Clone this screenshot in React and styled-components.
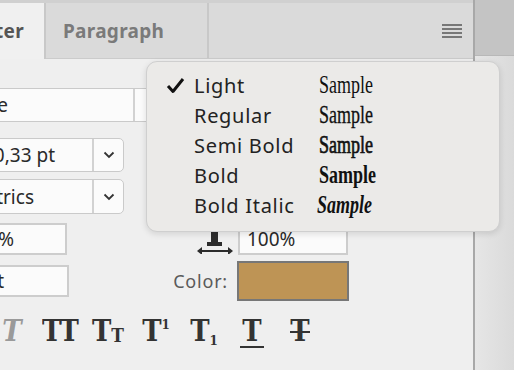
import React from "react";
import styled, { createGlobalStyle } from "styled-components";

const GlobalStyle = createGlobalStyle`
  html, body {
    margin: 0;
    padding: 0;
    background: #efefef;
  }
  body {
    font-family: "Noto Sans", "Liberation Sans", sans-serif;
  }
`;

const Screen = styled.div`
  position: relative;
  display: flex;
  width: 514px;
  height: 370px;
  overflow: hidden;
`;

const Panel = styled.div`
  width: 473px;
  flex-shrink: 0;
  display: flex;
  flex-direction: column;
  background: #efefef;
  border-right: 2px solid #a8a8a8;
  overflow: hidden;
`;

const Side = styled.div`
  flex: 1;
  display: flex;
  flex-direction: column;
  > div.top {
    height: 55px;
    background: #c4c4c4;
    border-bottom: 1px solid #b8b8b8;
  }
  > div.rest {
    flex: 1;
    background: linear-gradient(90deg, #e6e6e6, #dadada);
  }
`;

const TabBar = styled.div`
  height: 55px;
  display: flex;
  align-items: stretch;
  background: #dadada;
  border-top: 3px solid #d0d0d0;
  border-bottom: 1px solid #cbcbcb;
`;

const Tab = styled.div`
  display: flex;
  align-items: center;
  padding: 0 20px 0 ${p => (p.active ? "0" : "17px")};
  margin-left: ${p => (p.active ? "-70px" : "0")};
  width: ${p => (p.active ? "94px" : "124px")};
  justify-content: ${p => (p.active ? "flex-end" : "flex-start")};
  font-size: 19px;
  font-weight: 700;
  letter-spacing: 0.3px;
  color: ${p => (p.active ? "#555" : "#7a7a7a")};
  background: ${p => (p.active ? "#f0f0f0" : "#dadada")};
  border-right: 2px solid #c8c8c8;
  margin-bottom: ${p => (p.active ? "-1px" : "0")};
`;

const TabFill = styled.div`
  flex: 1;
  display: flex;
  align-items: center;
  justify-content: flex-end;
  padding-right: 11px;
`;

const Hamburger = styled.div`
  width: 20px;
  display: flex;
  flex-direction: column;
  gap: 2px;
  > span {
    height: 2px;
    background: #777;
  }
`;

const Body = styled.div`
  display: flex;
  flex-direction: column;
`;

const ComboField = styled.div`
  display: flex;
  height: ${p => p.h}px;
  width: ${p => p.w + 60}px;
  margin-left: -60px;
  margin-top: ${p => p.top}px;
  box-sizing: border-box;
  background: #fbfbfb;
  border: 1px solid #cacaca;
  border-radius: ${p => (p.rounded ? "5px" : "0")};
  font-size: 19px;
  color: #2a2a2a;
  > span.value {
    flex: 1;
    min-width: 0;
    overflow: hidden;
    white-space: nowrap;
    display: flex;
    align-items: center;
    justify-content: flex-end;
    padding-right: ${p => p.endPad}px;
  }
  > span.drop {
    width: ${p => p.dropW}px;
    flex-shrink: 0;
    border-left: 2px solid #d2d2d2;
    display: flex;
    align-items: center;
    justify-content: center;
  }
`;

const LowerRow = styled.div`
  display: flex;
  align-items: center;
  margin-top: ${p => p.top}px;
`;

const Field = styled.div`
  box-sizing: border-box;
  height: ${p => p.h}px;
  width: ${p => p.w}px;
  margin-left: ${p => p.offset || 0}px;
  background: #fbfbfb;
  border: 2px solid #cdcdcd;
  display: flex;
  align-items: center;
  justify-content: ${p => (p.endPad !== undefined ? "flex-end" : "flex-start")};
  padding-left: ${p => p.pad || 0}px;
  padding-right: ${p => p.endPad || 0}px;
  font-size: 19px;
  color: #2a2a2a;
  white-space: nowrap;
`;

const LabelCell = styled.div`
  width: ${p => p.w}px;
  display: flex;
  justify-content: flex-end;
  align-items: center;
  padding-right: ${p => p.pr}px;
  box-sizing: border-box;
  font-size: 18px;
  letter-spacing: 0.8px;
  color: #5a5a5a;
`;

const Swatch = styled.div`
  box-sizing: border-box;
  width: 112px;
  height: 40px;
  background: #be9455;
  border: 2px solid #777;
`;

const StyleRow = styled.div`
  display: flex;
  margin-left: -12px;
  margin-top: 20px;
  height: 30px;
`;

const StyleButton = styled.div`
  position: relative;
  width: 48px;
  display: flex;
  justify-content: center;
  align-items: flex-end;
  font-family: "DejaVu Serif", "Liberation Serif", serif;
  font-weight: 700;
  font-size: 26px;
  line-height: 22px;
  height: 22px;
  color: ${p => (p.dim ? "#9a9a9a" : "#333")};
  font-style: ${p => (p.italic ? "italic" : "normal")};
  > span.glyph {
    display: inline-block;
    transform: scaleY(1.12);
    transform-origin: bottom;
    letter-spacing: ${p => p.tight || 0}px;
  }
  > span.small {
    font-size: 17px;
    line-height: 14px;
    display: inline-block;
    transform: scaleY(1.1);
    transform-origin: bottom;
  }
  > span.sup {
    font-size: 12px;
    align-self: flex-start;
    line-height: 10px;
    margin-top: -1px;
  }
  > span.sub {
    font-size: 12px;
    line-height: 8px;
    margin-bottom: -2px;
  }
  > span.under {
    position: absolute;
    left: 12px;
    right: 12px;
    bottom: -5px;
    height: 2px;
    background: #333;
  }
  > span.strike {
    position: absolute;
    left: 14px;
    right: 14px;
    top: 10px;
    height: 2px;
    background: #333;
  }
`;

const Menu = styled.div`
  position: absolute;
  left: 146px;
  top: 61px;
  width: 354px;
  height: 171px;
  box-sizing: border-box;
  padding: 8px 0 0 19px;
  background: #ebeae8;
  border: 1px solid #cfcfcf;
  border-radius: 11px;
  box-shadow: 0 2px 6px rgba(0, 0, 0, 0.12);
`;

const MenuItem = styled.div`
  display: flex;
  align-items: center;
  height: 30px;
  > span.check {
    width: 28px;
    display: flex;
    align-items: center;
  }
  > span.label {
    width: 125px;
    font-size: 20px;
    letter-spacing: 0.7px;
    color: #222;
  }
  > span.sample {
    display: inline-block;
    font-family: "Liberation Serif", "Times New Roman", serif;
    font-size: 25px;
    color: #111;
    transform: scaleX(0.72);
    transform-origin: left center;
    font-weight: ${p => p.weight};
    -webkit-text-stroke: ${p => p.stroke}px #111;
    font-style: ${p => (p.italic ? "italic" : "normal")};
    margin-left: ${p => (p.italic ? "-2px" : "0")};
  }
`;

const Chevron = () => (
  <svg width="12" height="8" viewBox="0 0 12 8">
    <polyline points="1.5,1.5 6,6 10.5,1.5" fill="none" stroke="#333" strokeWidth="1.8" />
  </svg>
);

const Check = () => (
  <svg width="19" height="17" viewBox="0 0 19 17">
    <polyline points="2,9 7,14.5 17,2" fill="none" stroke="#111" strokeWidth="3" strokeLinejoin="round" />
  </svg>
);

const ScaleIcon = () => (
  <svg width="38" height="30" viewBox="0 0 38 30">
    <rect x="15" y="0" width="7" height="20" fill="#2c2c2c" />
    <rect x="11" y="18" width="15" height="4" fill="#2c2c2c" />
    <line x1="4" y1="27" x2="34" y2="27" stroke="#2c2c2c" strokeWidth="2" />
    <polygon points="1,27 6,23 6,31" fill="#2c2c2c" />
    <polygon points="37,27 32,23 32,31" fill="#2c2c2c" />
  </svg>
);

const weights = [
  { name: "Light", weight: 400, stroke: 0, checked: true },
  { name: "Regular", weight: 400, stroke: 0.3 },
  { name: "Semi Bold", weight: 400, stroke: 0.7 },
  { name: "Bold", weight: 700, stroke: 0 },
  { name: "Bold Italic", weight: 700, stroke: 0, italic: true }
];

const App = () => {
  return (
    <Screen>
      <GlobalStyle />
      <Panel>
        <TabBar>
          <Tab active>Character</Tab>
          <Tab>Paragraph</Tab>
          <TabFill>
            <Hamburger>
              <span />
              <span />
              <span />
              <span />
            </Hamburger>
          </TabFill>
        </TabBar>
        <Body>
          <ComboField top={29} h={34} w={172} dropW={36} endPad={125}>
            <span className="value">Moderne</span>
            <span className="drop">
              <Chevron />
            </span>
          </ComboField>
          <ComboField top={16} h={34} w={124} dropW={29} endPad={37} rounded>
            <span className="value">10,33 pt</span>
            <span className="drop">
              <Chevron />
            </span>
          </ComboField>
          <ComboField top={7} h={35} w={124} dropW={29} endPad={58} rounded>
            <span className="value">Metrics</span>
            <span className="drop">
              <Chevron />
            </span>
          </ComboField>
          <LowerRow top={9}>
            <Field h={32} w={127} offset={-60} endPad={51}>
              <span>100%</span>
            </Field>
            <LabelCell w={171} pr={4}>
              <ScaleIcon />
            </LabelCell>
            <Field h={31} w={110} pad={7}>
              <span>100%</span>
            </Field>
          </LowerRow>
          <LowerRow top={6}>
            <Field h={32} w={129} offset={-60} endPad={63}>
              <span>0 pt</span>
            </Field>
            <LabelCell w={168} pr={9}>
              Color:
            </LabelCell>
            <Swatch />
          </LowerRow>
          <StyleRow>
            <StyleButton dim italic>
              <span className="glyph">T</span>
            </StyleButton>
            <StyleButton tight={-1}>
              <span className="glyph">TT</span>
            </StyleButton>
            <StyleButton>
              <span className="glyph">T</span>
              <span className="small">T</span>
            </StyleButton>
            <StyleButton>
              <span className="glyph">T</span>
              <span className="sup">1</span>
            </StyleButton>
            <StyleButton>
              <span className="glyph">T</span>
              <span className="sub">1</span>
            </StyleButton>
            <StyleButton>
              <span className="glyph">T</span>
              <span className="under" />
            </StyleButton>
            <StyleButton>
              <span className="glyph">T</span>
              <span className="strike" />
            </StyleButton>
          </StyleRow>
        </Body>
      </Panel>
      <Side>
        <div className="top" />
        <div className="rest" />
      </Side>
      <Menu>
        {weights.map(w => (
          <MenuItem key={w.name} weight={w.weight} stroke={w.stroke} italic={w.italic}>
            <span className="check">{w.checked && <Check />}</span>
            <span className="label">{w.name}</span>
            <span className="sample">Sample</span>
          </MenuItem>
        ))}
      </Menu>
    </Screen>
  );
};

export default App;
